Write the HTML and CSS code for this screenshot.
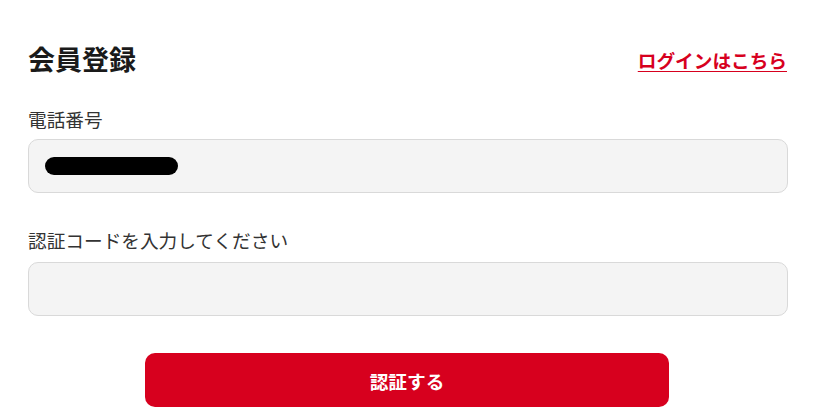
FILE: index.html
```html
<!DOCTYPE html>
<html lang="ja">
<head>
  <meta charset="UTF-8">
  <meta name="viewport" content="width=device-width, initial-scale=1.0">
  <title>会員登録</title>
  <link rel="stylesheet" href="styles.css">
</head>
<body>

<div class="container">
  <div class="head">
    <h1>会員登録</h1>
    <a href="#" class="login-link">ログインはこちら</a>
  </div>

  <div class="field">
    <label for="tel">電話番号</label>
    <div class="input-box">
      <span class="masked"></span>
    </div>
  </div>

  <div class="field">
    <label for="code">認証コードを入力してください</label>
    <input type="text" id="code" class="input-box">
  </div>

  <button class="submit">認証する</button>
</div>

</body>
</html>
```

FILE: styles.css
```css
body {
  margin: 0;
  padding: 0;
  background: #fff;
  font-family: "Noto Sans CJK JP", "Noto Sans", sans-serif;
  color: #333;
}
.container {
  padding: 41px 44px 0 28px;
}
.head {
  display: flex;
  justify-content: space-between;
  align-items: center;
  height: 36px;
}
h1 {
  margin: 0;
  font-size: 27px;
  font-weight: bold;
  color: #1a1a1a;
  line-height: 36px;
}
.login-link {
  color: #d7001e;
  font-size: 18.67px;
  font-weight: bold;
  text-decoration: underline;
  text-underline-offset: 3px;
  margin-right: 1px;
}
.field {
  margin-top: 28px;
}
.field + .field {
  margin-top: 33px;
}
label {
  display: block;
  font-size: 18.67px;
  line-height: 27px;
  margin-bottom: 7px;
  color: #333;
}
.field + .field label {
  margin-bottom: 9px;
}
.input-box {
  display: flex;
  align-items: center;
  box-sizing: border-box;
  width: 100%;
  height: 54px;
  padding: 0 16px;
  background: #f4f4f4;
  border: 1px solid #d9d9d9;
  border-radius: 10px;
  font-size: 18px;
  font-family: inherit;
}
.masked {
  display: block;
  width: 133px;
  height: 18px;
  background: #000;
  border-radius: 9px;
}
.submit {
  display: block;
  width: 524px;
  height: 54px;
  margin: 37px auto 0 117px;
  background: #d7001e;
  color: #fff;
  border: none;
  border-radius: 10px;
  font-family: inherit;
  font-size: 18.67px;
  font-weight: bold;
  cursor: pointer;
}
```
